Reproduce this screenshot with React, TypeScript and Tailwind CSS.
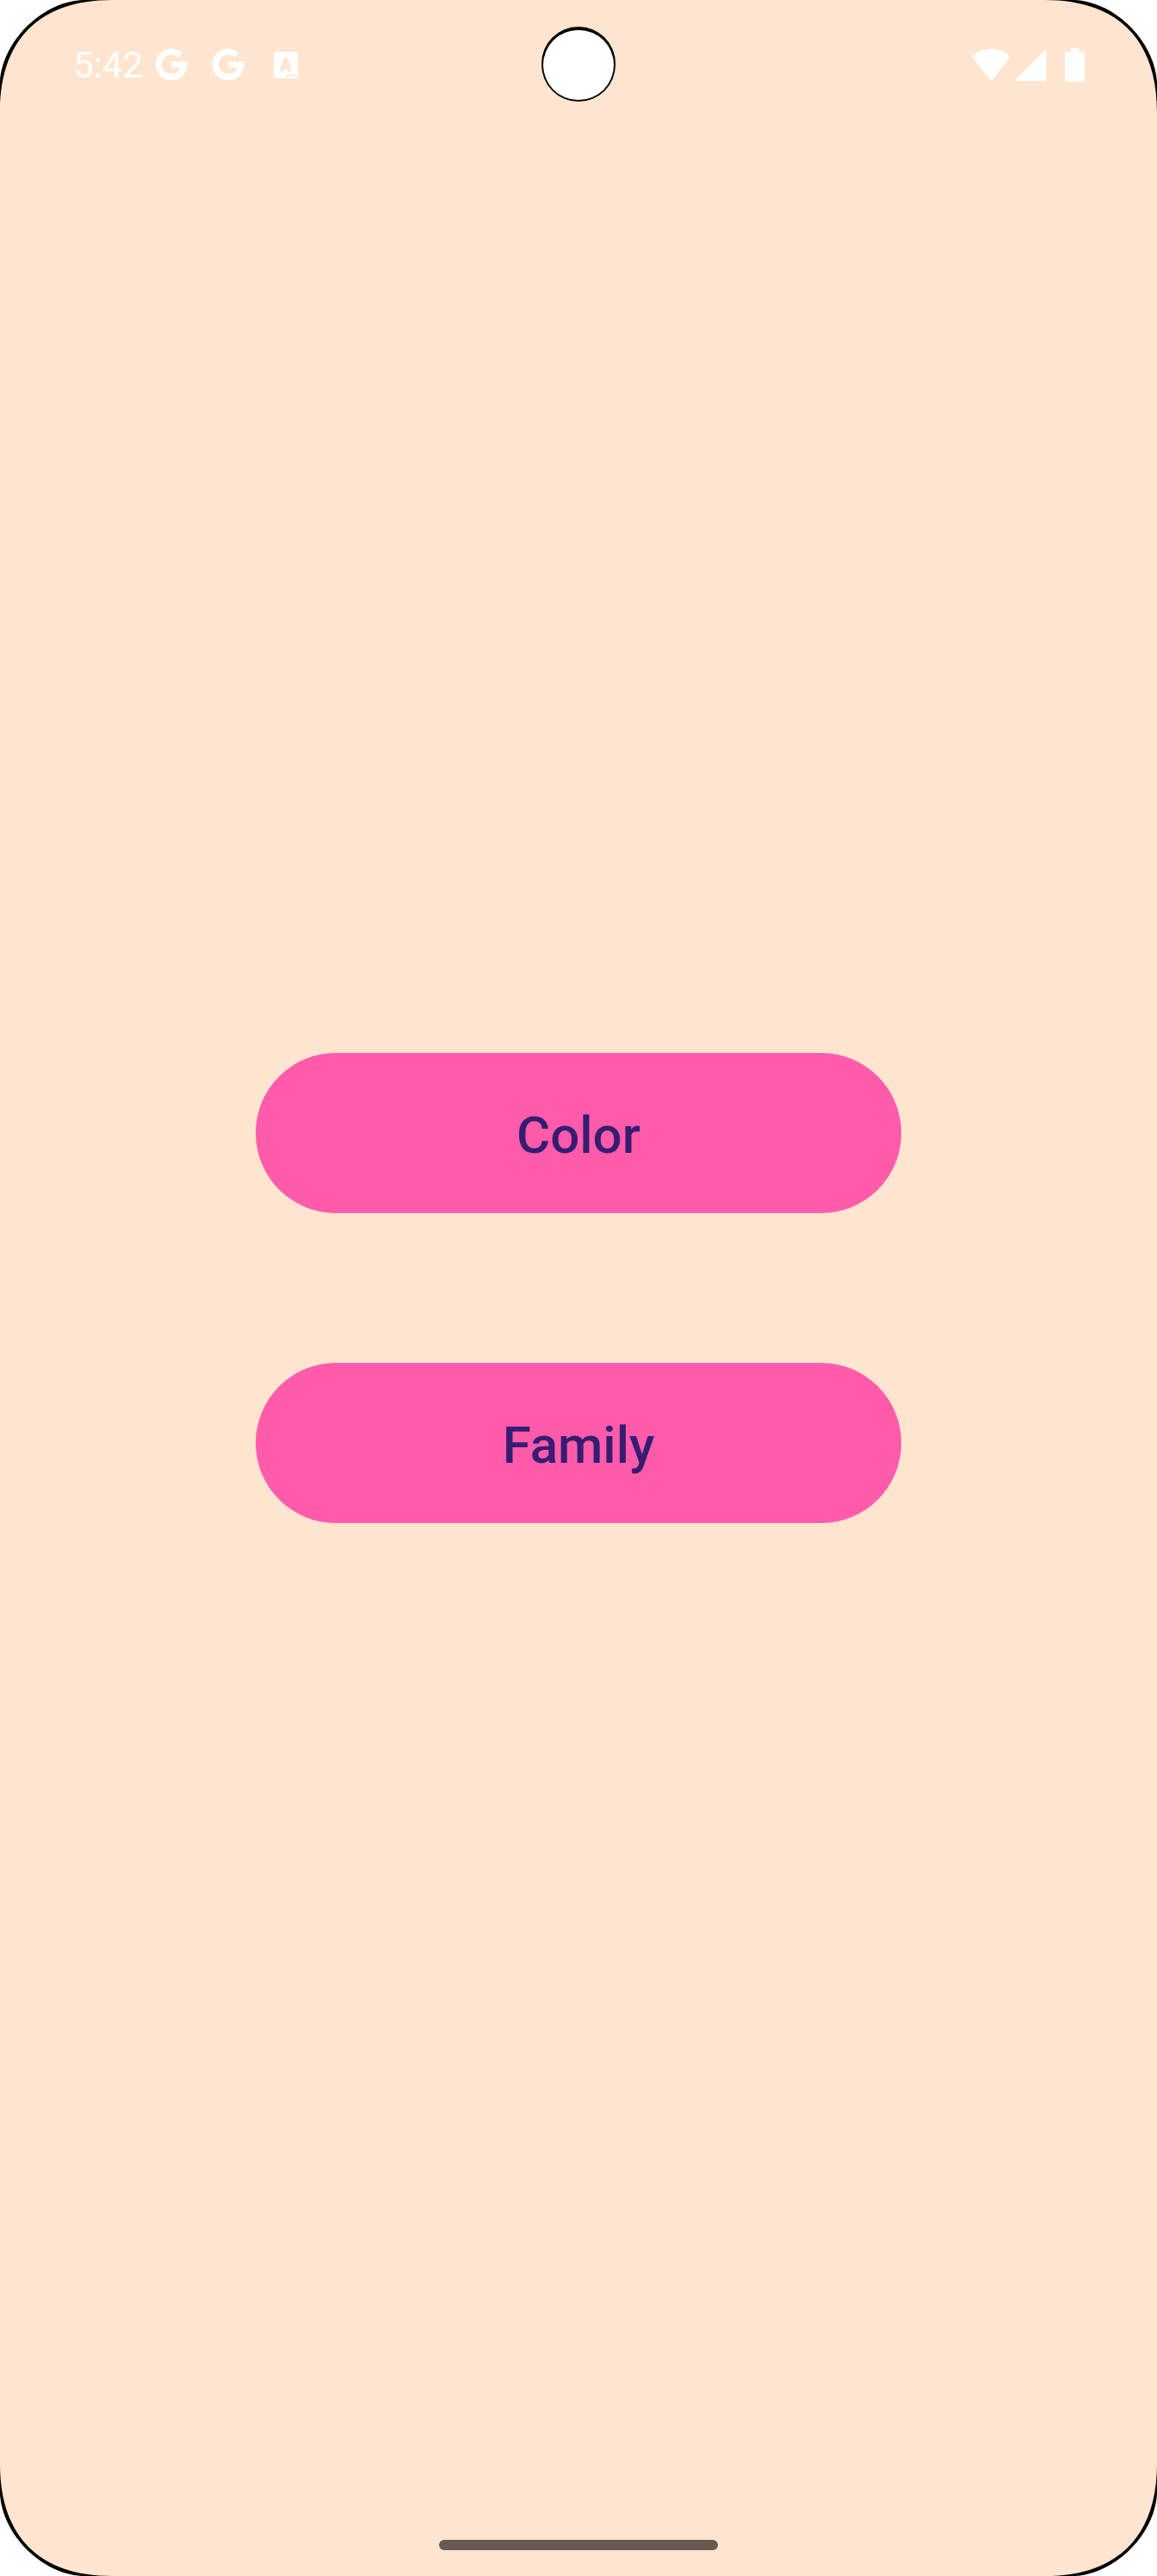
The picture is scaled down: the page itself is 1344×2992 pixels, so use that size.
import type { ReactNode } from "react";

function GoogleIcon() {
  return (
    <svg viewBox="0 0 38 38" className="size-[38px]" role="img" aria-label="Google">
      <path
        fill="white"
        d="M19 15.2H37.2C38.8 28 31.4 37.5 19 37.5A18.5 18.5 0 1 1 31.9 5.6L26.4 10.7A11 11 0 1 0 29.2 22.4H19Z"
      />
    </svg>
  );
}

function KeyboardIcon() {
  return (
    <svg viewBox="0 0 28 31" className="h-[31px] w-7" role="img" aria-label="Input language">
      <rect width="28" height="31" rx="3" fill="white" />
      <path
        d="M9.2 21.3L13.4 8.8H14.4L18.6 21.3M10.8 18H17"
        fill="none"
        stroke="#ffe4cf"
        strokeWidth="4"
        strokeLinecap="round"
        strokeLinejoin="round"
      />
      <g fill="#ffe4cf">
        <circle cx="16.2" cy="27.4" r="1.5" />
        <circle cx="20.5" cy="27.4" r="1.5" />
        <circle cx="24.8" cy="27.4" r="1.5" />
      </g>
    </svg>
  );
}

function WifiIcon() {
  return (
    <svg viewBox="0 0 45 38" className="h-[38px] w-[45px]" role="img" aria-label="Wi-Fi">
      <path fill="white" d="M0 10.3C6 4 14 .5 22.5 .5S39 4 45 10.3L22.5 38Z" />
    </svg>
  );
}

function SignalIcon() {
  return (
    <svg viewBox="0 0 38 38" className="size-[38px]" role="img" aria-label="Mobile signal">
      <path fill="white" d="M0 38L37.5 .5V38Z" />
    </svg>
  );
}

function BatteryIcon() {
  return (
    <svg viewBox="0 0 23 39" className="h-[39px] w-[23px]" role="img" aria-label="Battery full">
      <path
        fill="white"
        d="M7 0H16.5V4H21Q23 4 23 6V37Q23 39 21 39H2Q0 39 0 37V6Q0 4 2 4H7Z"
      />
    </svg>
  );
}

function Corner({ className }: { className: string }) {
  return (
    <svg viewBox="0 0 130 130" className={`absolute size-[130px] ${className}`} aria-hidden="true">
      <path d="M0 130C0 46 46 0 130 0H0Z" fill="black" />
      <path d="M0 95C3 48 48 3 95 0H0Z" fill="white" />
    </svg>
  );
}

function StatusBar() {
  return (
    <header className="relative flex h-[150px] items-center justify-between pr-[84px] pl-[85px]">
      <div className="flex items-center">
        <time className="w-[95px] pt-[2px] text-[42px] leading-[48px] text-white">5:42</time>
        <div className="flex items-center gap-7">
          <GoogleIcon />
          <GoogleIcon />
          <div className="pl-[6px]">
            <KeyboardIcon />
          </div>
        </div>
      </div>
      <div className="absolute top-[31px] left-1/2 h-[87px] w-[86px] -translate-x-1/2 rounded-full bg-black px-[2px] pt-1 pb-[2px]">
        <div className="size-full rounded-full bg-white" />
      </div>
      <div className="flex items-center">
        <WifiIcon />
        <div className="pl-1">
          <SignalIcon />
        </div>
        <div className="pl-[21px]">
          <BatteryIcon />
        </div>
      </div>
    </header>
  );
}

function MenuButton({ children }: { children: ReactNode }) {
  return (
    <button
      type="button"
      className="h-[186px] w-full cursor-pointer rounded-full bg-[#ff5bab] pt-[6px] text-[60px] leading-[72px] font-medium text-[#371d72]"
    >
      {children}
    </button>
  );
}

export default function App() {
  return (
    <div className="relative flex min-h-screen flex-col overflow-hidden bg-[#ffe4cf] font-['Roboto',sans-serif]">
      <StatusBar />
      <main className="flex flex-1 flex-col items-center justify-center px-6">
        <nav className="flex w-full max-w-[750px] flex-col gap-[174px]">
          <MenuButton>Color</MenuButton>
          <MenuButton>Family</MenuButton>
        </nav>
      </main>
      <footer className="flex h-[150px] items-end justify-center pb-[30px]">
        <div className="h-3 w-[324px] rounded-full bg-[#665b52]" />
      </footer>
      <Corner className="top-0 left-0" />
      <Corner className="top-0 right-0 rotate-90" />
      <Corner className="right-0 bottom-0 rotate-180" />
      <Corner className="bottom-0 left-0 -rotate-90" />
    </div>
  );
}
